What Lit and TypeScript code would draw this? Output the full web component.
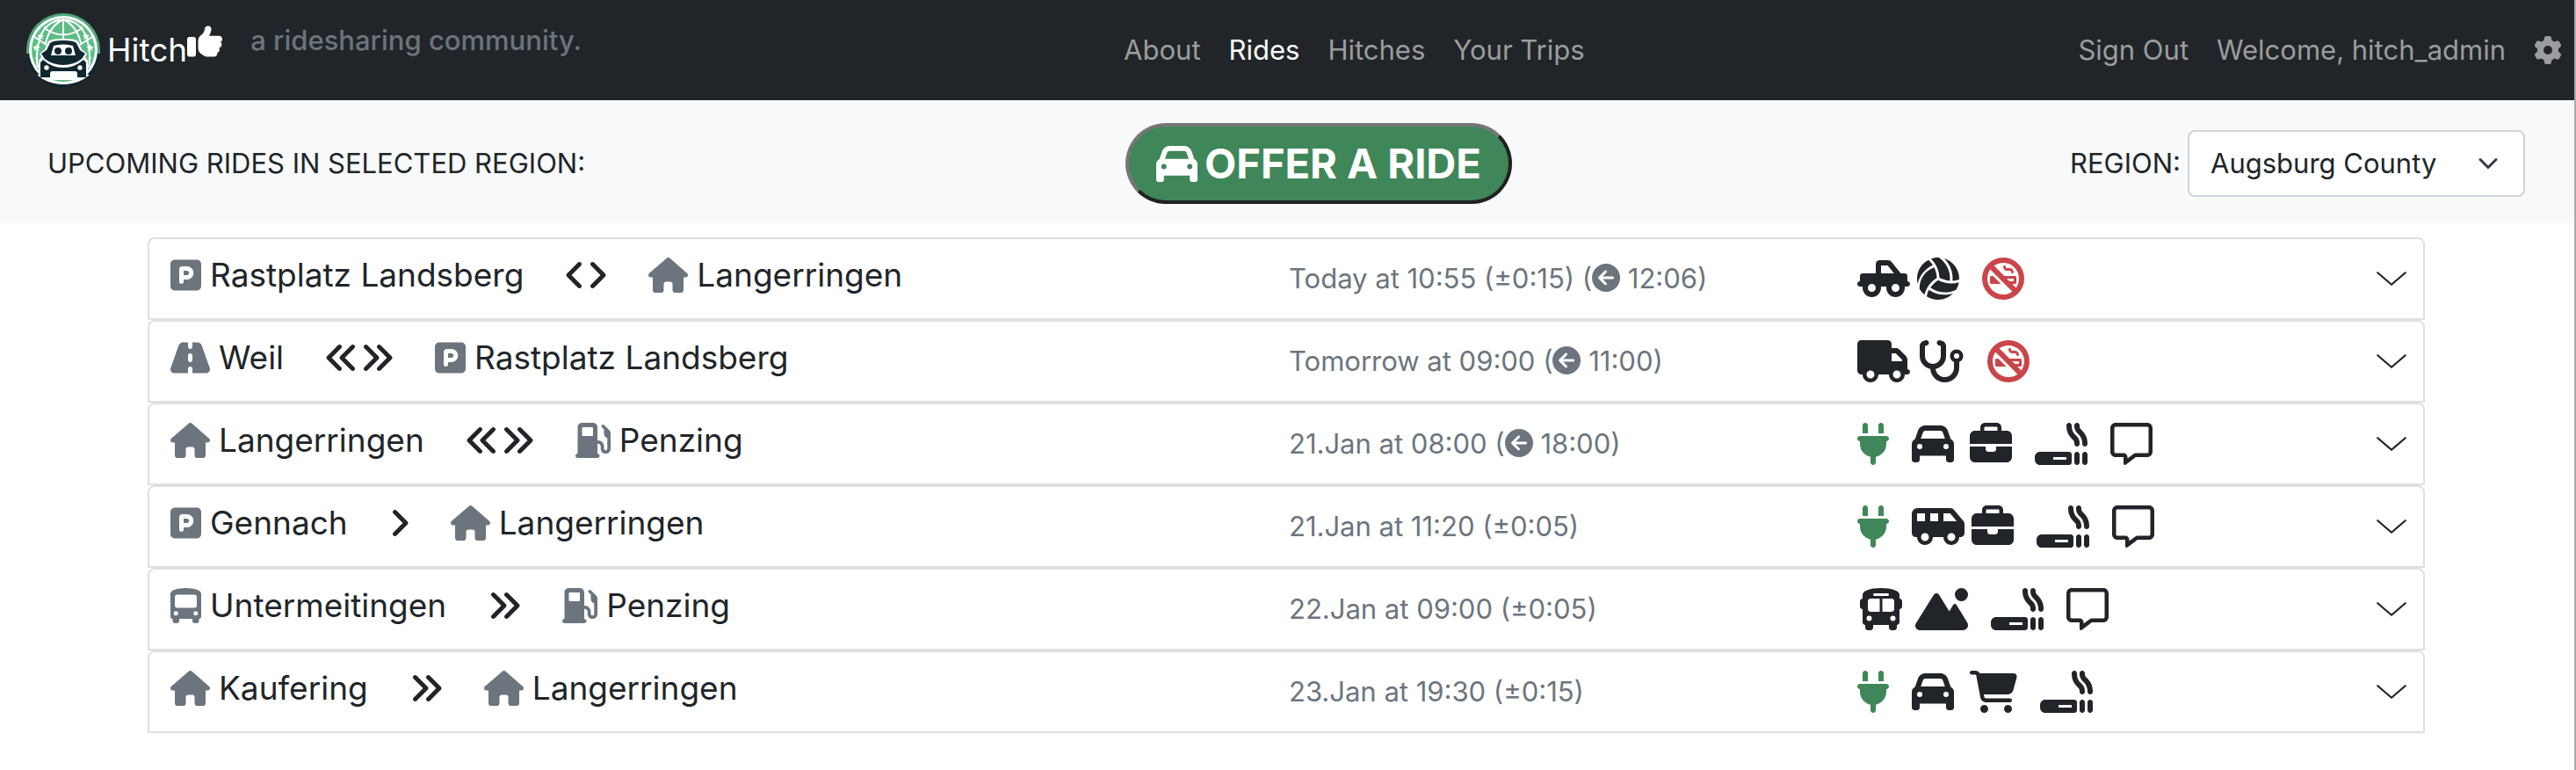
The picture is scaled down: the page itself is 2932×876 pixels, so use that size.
import { LitElement, html, css, svg } from "lit";
import { customElement, property } from "lit/decorators.js";

type Glyph = { w: number; d: string };

const GLYPHS: Record<string, Glyph> = {
  house: { w: 576, d: "M575.8 255.5c0 18-15 32.1-32 32.1h-32l.7 160.2c0 2.7-.2 5.4-.5 8.1V472c0 22.1-17.9 40-40 40H456c-1.1 0-2.2 0-3.3-.1c-1.4 .1-2.8 .1-4.2 .1H416 392c-22.1 0-40-17.9-40-40V448 384c0-17.7-14.3-32-32-32H256c-17.7 0-32 14.3-32 32v64 24c0 22.1-17.9 40-40 40H160 128.1c-1.5 0-3-.1-4.5-.2c-1.2 .1-2.4 .2-3.6 .2H104c-22.1 0-40-17.9-40-40V360c0-.9 0-1.9 .1-2.8V287.6H32c-18 0-32-14-32-32.1c0-9 3-17 10-24L266.4 8c7-7 15-8 22-8s15 2 21 7L564.8 231.5c8 7 12 15 11 24z" },
  parking: { w: 448, d: "M64 32C28.7 32 0 60.7 0 96V416c0 35.3 28.7 64 64 64H384c35.3 0 64-28.7 64-64V96c0-35.3-28.7-64-64-64H64zM192 256h48c17.7 0 32-14.3 32-32s-14.3-32-32-32H192v64zm48 64H192v32c0 17.7-14.3 32-32 32s-32-14.3-32-32V288 168c0-22.1 17.9-40 40-40h72c53 0 96 43 96 96s-43 96-96 96z" },
  road: { w: 576, d: "M256 32H181.2c-27.1 0-51.3 17.1-60.3 42.6L3.1 407.2C1.1 413 0 419.2 0 425.4C0 455.5 24.5 480 54.6 480H256V416c0-17.7 14.3-32 32-32s32 14.3 32 32v64H521.4c30.2 0 54.6-24.5 54.6-54.6c0-6.2-1.1-12.4-3.1-18.2L455.1 74.6C446 49.1 421.9 32 394.8 32H320V96c0 17.7-14.3 32-32 32s-32-14.3-32-32V32zm64 192v64c0 17.7-14.3 32-32 32s-32-14.3-32-32V224c0-17.7 14.3-32 32-32s32 14.3 32 32z" },
  pump: { w: 512, d: "M32 64C32 28.7 60.7 0 96 0H256c35.3 0 64 28.7 64 64V256h8c48.6 0 88 39.4 88 88v32c0 13.3 10.7 24 24 24s24-10.7 24-24V222c-27.6-7.1-48-32.2-48-62V96L384 64c-8.8-8.8-8.8-23.2 0-32s23.2-8.8 32 0l77.3 77.3c12 12 18.7 28.3 18.7 45.3V168v24 32V376c0 39.8-32.2 72-72 72s-72-32.2-72-72V344c0-22.1-17.9-40-40-40h-8V448c17.7 0 32 14.3 32 32s-14.3 32-32 32H32c-17.7 0-32-14.3-32-32s14.3-32 32-32V64zM96 80v96c0 8.8 7.2 16 16 16H240c8.8 0 16-7.2 16-16V80c0-8.8-7.2-16-16-16H112c-8.8 0-16 7.2-16 16z" },
  busStop: { w: 448, d: "M224 0C348.8 0 448 35.2 448 80V96 416c0 17.7-14.3 32-32 32v32c0 17.7-14.3 32-32 32H352c-17.7 0-32-14.3-32-32V448H128v32c0 17.7-14.3 32-32 32H64c-17.7 0-32-14.3-32-32l0-32c-17.7 0-32-14.3-32-32V96 80C0 35.2 99.2 0 224 0zM64 128V256c0 17.7 14.3 32 32 32H352c17.7 0 32-14.3 32-32V128c0-17.7-14.3-32-32-32H96c-17.7 0-32 14.3-32 32zM80 400a32 32 0 1 0 0-64 32 32 0 1 0 0 64zm288 0a32 32 0 1 0 0-64 32 32 0 1 0 0 64z" },
  right: { w: 320, d: "M278.6 233.4c12.5 12.5 12.5 32.8 0 45.3l-160 160c-12.5 12.5-32.8 12.5-45.3 0s-12.5-32.8 0-45.3L210.7 256 73.4 118.6c-12.5-12.5-12.5-32.8 0-45.3s32.8-12.5 45.3 0l160 160z" },
  left: { w: 320, d: "M41.4 233.4c-12.5 12.5-12.5 32.8 0 45.3l160 160c12.5 12.5 32.8 12.5 45.3 0s12.5-32.8 0-45.3L109.3 256 246.6 118.6c12.5-12.5 12.5-32.8 0-45.3s-32.8-12.5-45.3 0l-160 160z" },
  rights: { w: 512, d: "M470.6 278.6c12.5-12.5 12.5-32.8 0-45.3l-160-160c-12.5-12.5-32.8-12.5-45.3 0s-12.5 32.8 0 45.3L402.7 256 265.4 393.4c-12.5 12.5-12.5 32.8 0 45.3s32.8 12.5 45.3 0l160-160zm-352 160l160-160c12.5-12.5 12.5-32.8 0-45.3l-160-160c-12.5-12.5-32.8-12.5-45.3 0s-12.5 32.8 0 45.3L210.7 256 73.4 393.4c-12.5 12.5-12.5 32.8 0 45.3s32.8 12.5 45.3 0z" },
  lefts: { w: 512, d: "M41.4 233.4c-12.5 12.5-12.5 32.8 0 45.3l160 160c12.5 12.5 32.8 12.5 45.3 0s12.5-32.8 0-45.3L109.3 256 246.6 118.6c12.5-12.5 12.5-32.8 0-45.3s-32.8-12.5-45.3 0l-160 160zm352-160l-160 160c-12.5 12.5-12.5 32.8 0 45.3l160 160c12.5 12.5 32.8 12.5 45.3 0s12.5-32.8 0-45.3L301.3 256 438.6 118.6c12.5-12.5 12.5-32.8 0-45.3s-32.8-12.5-45.3 0z" },
  plug: { w: 384, d: "M96 0C78.3 0 64 14.3 64 32v96h64V32c0-17.7-14.3-32-32-32zM288 0c-17.7 0-32 14.3-32 32v96h64V32c0-17.7-14.3-32-32-32zM32 160c-17.7 0-32 14.3-32 32s14.3 32 32 32v32c0 77.4 55 142 128 156.8V480c0 17.7 14.3 32 32 32s32-14.3 32-32V412.8C297 398 352 333.4 352 256V224c17.7 0 32-14.3 32-32s-14.3-32-32-32H32z" },
  car: { w: 512, d: "M135.2 117.4L109.1 192H402.9l-26.1-74.6C372.3 104.6 360.2 96 346.6 96H165.4c-13.6 0-25.7 8.6-30.2 21.4zM39.6 196.8L74.8 96.3C88.3 57.8 124.6 32 165.4 32H346.6c40.8 0 77.1 25.8 90.6 64.3l35.2 100.5c23.2 9.6 39.6 32.5 39.6 59.2V400v48c0 17.7-14.3 32-32 32H448c-17.7 0-32-14.3-32-32V400H96v48c0 17.7-14.3 32-32 32H32c-17.7 0-32-14.3-32-32V400 256c0-26.7 16.4-49.6 39.6-59.2zM128 288a32 32 0 1 0 -64 0 32 32 0 1 0 64 0zm288 32a32 32 0 1 0 0-64 32 32 0 1 0 0 64z" },
  briefcase: { w: 512, d: "M184 48H328c4.4 0 8 3.6 8 8V96H176V56c0-4.4 3.6-8 8-8zm-56 8V96H64C28.7 96 0 124.7 0 160v96H192 320 512V160c0-35.3-28.7-64-64-64H384V56c0-30.9-25.1-56-56-56H184c-30.9 0-56 25.1-56 56zM512 288H320v32c0 17.7-14.3 32-32 32H224c-17.7 0-32-14.3-32-32V288H0V416c0 35.3 28.7 64 64 64H448c35.3 0 64-28.7 64-64V288z" },
  smoking: { w: 640, d: "M448 32V43c0 38.2 15.2 74.8 42.2 101.8l21 21c21 21 32.8 49.5 32.8 79.2v11c0 17.7-14.3 32-32 32s-32-14.3-32-32V245c0-12.7-5.1-24.9-14.1-33.9l-21-21C405.9 151.1 384 98.1 384 43V32c0-17.7 14.3-32 32-32s32 14.3 32 32zM576 256V245c0-38.2-15.2-74.8-42.2-101.8l-21-21c-21-21-32.8-49.5-32.8-79.2V32c0-17.7 14.3-32 32-32s32 14.3 32 32V43c0 12.7 5.1 24.9 14.1 33.9l21 21c39 39 60.9 91.9 60.9 147.1v11c0 17.7-14.3 32-32 32s-32-14.3-32-32zM0 416c0-35.3 28.7-64 64-64H416c17.7 0 32 14.3 32 32v96c0 17.7-14.3 32-32 32H64c-35.3 0-64-28.7-64-64V416zm224 0v32H384V416H224zm288-64c17.7 0 32 14.3 32 32v96c0 17.7-14.3 32-32 32s-32-14.3-32-32V384c0-17.7 14.3-32 32-32zm96 0c17.7 0 32 14.3 32 32v96c0 17.7-14.3 32-32 32s-32-14.3-32-32V384c0-17.7 14.3-32 32-32z" },
  noSmoking: { w: 512, d: "M99.5 144.8L178.7 224l96 96 92.5 92.5C335.9 434.9 297.5 448 256 448C150 448 64 362 64 256c0-41.5 13.1-79.9 35.5-111.2zM333.3 288l-32-32H384v32H333.3zm32 32H400c8.8 0 16-7.2 16-16V240c0-8.8-7.2-16-16-16H269.3L144.8 99.5C176.1 77.1 214.5 64 256 64c106 0 192 86 192 192c0 41.5-13.1 79.9-35.5 111.2L365.3 320zM256 512A256 256 0 1 0 256 0a256 256 0 1 0 0 512zM272 96c-8.8 0-16 7.2-16 16c0 26.5 21.5 48 48 48h32c8.8 0 16 7.2 16 16s7.2 16 16 16s16-7.2 16-16c0-26.5-21.5-48-48-48H304c-8.8 0-16-7.2-16-16s-7.2-16-16-16zM229.5 320l-96-96H112c-8.8 0-16 7.2-16 16v64c0 8.8 7.2 16 16 16H229.5z" },
  message: { w: 512, d: "M160 368c26.5 0 48 21.5 48 48v16l72.5-54.4c8.3-6.2 18.4-9.6 28.8-9.6H448c8.8 0 16-7.2 16-16V64c0-8.8-7.2-16-16-16H64c-8.8 0-16 7.2-16 16V352c0 8.8 7.2 16 16 16h96zm48 124l-.2 .2-5.1 3.8-17.1 12.8c-4.8 3.6-11.3 4.2-16.8 1.5s-8.8-8.2-8.8-14.3V474.7v-6.4V468v-4V416H112 64c-35.3 0-64-28.7-64-64V64C0 28.7 28.7 0 64 0H448c35.3 0 64 28.7 64 64V352c0 35.3-28.7 64-64 64H309.3L208 492z" },
  pickup: { w: 640, d: "M368.6 96l76.8 96H288V96h80.6zM224 80V192H64c-17.7 0-32 14.3-32 32v64c-17.7 0-32 14.3-32 32s14.3 32 32 32H65.1c-.7 5.2-1.1 10.6-1.1 16c0 61.9 50.1 112 112 112s112-50.1 112-112c0-5.4-.4-10.8-1.1-16h66.3c-.7 5.2-1.1 10.6-1.1 16c0 61.9 50.1 112 112 112s112-50.1 112-112c0-5.4-.4-10.8-1.1-16H608c17.7 0 32-14.3 32-32s-14.3-32-32-32V224c0-17.7-14.3-32-32-32H527.4L418.6 56c-12.1-15.2-30.5-24-50-24H272c-26.5 0-48 21.5-48 48zM128 368a48 48 0 1 1 96 0 48 48 0 1 1 -96 0zM416 368a48 48 0 1 1 96 0 48 48 0 1 1 -96 0z" },
  volleyball: { w: 512, d: "M511.8 267.4c-26.1 8.7-53.4 13.8-81 15.1c9.2-105.3-31.5-204.2-103.2-272.4C434.1 41.1 512 139.5 512 256c0 3.8-.1 7.6-.2 11.4zm-3.9 34.7c-5.8 32-17.6 62-34.2 88.7c-97.5 48.5-217.7 42.6-311.9-24.5c23.7-36.2 55.4-67.7 94.5-91.8c79.9 43.2 170.1 50.8 251.6 27.6zm-236-55.5c-2.5-90.9-41.1-172.7-101.9-231.7C196.8 5.2 225.8 0 256 0c2.7 0 5.3 0 7.9 .1c90.8 60.2 145.7 167.2 134.7 282.3c-43.1-2.4-86.4-14.1-126.8-35.9zM138 28.8c20.6 18.3 38.7 39.4 53.7 62.6C95.9 136.1 30.6 220.8 7.3 316.9C2.5 297.4 0 277 0 256C0 157.2 56 71.5 138 28.8zm69.6 90.5c19.5 38.6 31 81.9 32.3 127.7C162.5 294.6 110.9 368.9 90.2 451C66 430.6 45.6 405.9 30.2 378c-3.9-113.9 61.9-215.9 177.4-258.7zM116.5 471c5-27 14-53 28-78c91 64 195 72 293 42C391 483 327 512 256 512c-51.600 0-99.500-15.100-139.500-41z" },
  truck: { w: 640, d: "M48 0C21.5 0 0 21.5 0 48V368c0 26.5 21.5 48 48 48H64c0 53 43 96 96 96s96-43 96-96H384c0 53 43 96 96 96s96-43 96-96h32c17.7 0 32-14.3 32-32s-14.3-32-32-32V288 256 237.3c0-17-6.7-33.3-18.7-45.3L512 114.7c-12-12-28.3-18.7-45.3-18.7H416V48c0-26.5-21.5-48-48-48H48zM416 160h50.7L544 237.3V256H416V160zM112 416a48 48 0 1 1 96 0 48 48 0 1 1 -96 0zm368-48a48 48 0 1 1 0 96 48 48 0 1 1 0-96z" },
  stethoscope: { w: 576, d: "M142.4 21.9c5.6 16.8-3.5 34.9-20.2 40.5L96 71.1V192c0 53 43 96 96 96s96-43 96-96V71.1l-26.1-8.7c-16.8-5.6-25.8-23.7-20.2-40.5s23.7-25.8 40.5-20.2l26.1 8.7C334.4 19.1 352 43.5 352 71.1V192c0 77.2-54.6 141.6-127.3 156.7C231 404.6 278.4 448 336 448c61.9 0 112-50.1 112-112V265.3c-28.3-12.3-48-40.5-48-73.3c0-44.2 35.8-80 80-80s80 35.8 80 80c0 32.8-19.7 61-48 73.3V336c0 97.2-78.8 176-176 176c-92.9 0-168.9-71.9-175.5-163.1C87.2 334.2 32 269.6 32 192V71.1c0-27.5 17.6-52 43.8-60.7l26.1-8.7c16.8-5.6 34.9 3.5 40.5 20.2zM480 224a32 32 0 1 0 0-64 32 32 0 1 0 0 64z" },
  van: { w: 640, d: "M64 104v88h96V96H72c-4.4 0-8 3.6-8 8zm482 88L465.1 96H384v96H546zm-226 0V96H224v96h96zM592 384H576c0 53-43 96-96 96s-96-43-96-96H256c0 53-43 96-96 96s-96-43-96-96H48c-26.5 0-48-21.5-48-48V104C0 64.2 32.2 32 72 32H192 352 465.1c18.9 0 36.8 8.3 49 22.8L625 186.5c9.7 11.5 15 26.1 15 41.2V336c0 26.5-21.5 48-48 48zm-64 0a48 48 0 1 0 -96 0 48 48 0 1 0 96 0zM160 432a48 48 0 1 0 0-96 48 48 0 1 0 0 96z" },
  bus: { w: 576, d: "M288 0C422.4 0 512 35.2 512 80V96l0 32c17.7 0 32 14.3 32 32v64c0 17.7-14.3 32-32 32l0 160c0 17.7-14.3 32-32 32v32c0 17.7-14.3 32-32 32H416c-17.7 0-32-14.3-32-32V448H192v32c0 17.7-14.3 32-32 32H128c-17.7 0-32-14.3-32-32l0-32c-17.7 0-32-14.3-32-32l0-160c-17.7 0-32-14.3-32-32V160c0-17.7 14.3-32 32-32h0V96h0V80C64 35.2 153.6 0 288 0zM128 160v96c0 17.7 14.3 32 32 32H272V128H160c-17.7 0-32 14.3-32 32zM304 288H416c17.7 0 32-14.3 32-32V160c0-17.7-14.3-32-32-32H304V288zM144 400a32 32 0 1 0 0-64 32 32 0 1 0 0 64zm288 0a32 32 0 1 0 0-64 32 32 0 1 0 0 64zM384 80c0-8.8-7.2-16-16-16H208c-8.8 0-16 7.2-16 16s7.2 16 16 16H368c8.8 0 16-7.2 16-16z" },
  mountain: { w: 640, d: "M560 160A80 80 0 1 0 560 0a80 80 0 1 0 0 160zM55.9 512H381.1h75H578.9c33.8 0 61.1-27.4 61.1-61.1c0-11.2-3.1-22.2-8.9-31.8l-132-216.3C495 196.1 487.8 192 480 192s-15 4.1-19.1 10.7l-48.2 79L286.8 81c-6.6-10.6-18.3-17-30.8-17s-24.1 6.4-30.8 17L8.6 426.4C3 435.3 0 445.6 0 456.1C0 487 25 512 55.9 512z" },
  cart: { w: 576, d: "M0 24C0 10.7 10.7 0 24 0H69.5c22 0 41.5 12.8 50.6 32h411c26.3 0 45.5 25 38.6 50.4l-41 152.3c-8.5 31.4-37 53.3-69.5 53.3H170.7l5.4 28.5c2.2 11.3 12.1 19.5 23.6 19.5H488c13.3 0 24 10.7 24 24s-10.7 24-24 24H199.7c-34.6 0-64.3-24.6-70.7-58.5L77.4 54.5c-.7-3.8-4-6.5-7.9-6.5H24C10.7 48 0 37.3 0 24zM128 464a48 48 0 1 1 96 0 48 48 0 1 1 -96 0zm336-48a48 48 0 1 1 0 96 48 48 0 1 1 0-96z" },
  gear: { w: 512, d: "M495.9 166.6c3.2 8.7 .5 18.4-6.4 24.6l-43.3 39.4c1.1 8.3 1.7 16.8 1.7 25.4s-.6 17.1-1.7 25.4l43.3 39.4c6.9 6.2 9.6 15.9 6.4 24.6c-4.4 11.9-9.7 23.3-15.8 34.3l-4.7 8.1c-6.6 11-14 21.4-22.1 31.2c-5.9 7.2-15.7 9.6-24.5 6.8l-55.7-17.7c-13.4 10.3-28.2 18.9-44 25.4l-12.5 57.1c-2 9.1-9 16.3-18.2 17.8c-13.8 2.3-28 3.5-42.5 3.5s-28.7-1.2-42.5-3.5c-9.2-1.5-16.2-8.7-18.2-17.8l-12.5-57.1c-15.8-6.5-30.6-15.1-44-25.4L83.1 425.9c-8.8 2.8-18.6 .3-24.5-6.8c-8.1-9.8-15.5-20.2-22.1-31.2l-4.7-8.1c-6.1-11-11.4-22.4-15.8-34.3c-3.2-8.7-.5-18.4 6.4-24.6l43.3-39.4C64.6 273.1 64 264.6 64 256s.6-17.1 1.7-25.4L22.4 191.2c-6.9-6.2-9.6-15.9-6.4-24.6c4.4-11.9 9.7-23.3 15.8-34.3l4.7-8.1c6.6-11 14-21.4 22.1-31.2c5.9-7.2 15.7-9.6 24.5-6.8l55.7 17.7c13.4-10.3 28.2-18.9 44-25.4l12.5-57.1c2-9.1 9-16.3 18.2-17.8C227.3 1.2 241.5 0 256 0s28.7 1.2 42.5 3.5c9.2 1.5 16.2 8.7 18.2 17.8l12.5 57.1c15.8 6.5 30.6 15.1 44 25.4l55.7-17.7c8.8-2.8 18.6-.3 24.5 6.8c8.1 9.8 15.5 20.2 22.1 31.2l4.7 8.1c6.1 11 11.4 22.4 15.8 34.3zM256 336a80 80 0 1 0 0-160 80 80 0 1 0 0 160z" },
  thumb: { w: 512, d: "M313.4 32.9c26 5.2 42.9 30.5 37.7 56.5l-2.3 11.4c-5.3 26.7-15.1 52.1-28.8 75.2H464c26.5 0 48 21.5 48 48c0 18.5-10.5 34.6-25.9 42.6C497 275.4 504 288.9 504 304c0 23.4-16.8 42.9-38.9 47.1c4.4 7.3 6.9 15.8 6.9 24.9c0 21.3-13.9 39.4-33.1 45.6c.7 3.3 1.1 6.8 1.1 10.4c0 26.5-21.5 48-48 48H294.5c-19 0-37.5-5.6-53.3-16.1l-38.5-25.7C176 420.4 160 390.4 160 358.3V320 272 247.1c0-29.2 13.3-56.7 36-75l7.4-5.9c26.5-21.2 44.6-51 51.2-84.2l2.3-11.4c5.2-26 30.5-42.9 56.5-37.7zM32 192H96c17.7 0 32 14.3 32 32V448c0 17.7-14.3 32-32 32H32c-17.7 0-32-14.3-32-32V224c0-17.7 14.3-32 32-32z" },
  back: { w: 512, d: "M512 256A256 256 0 1 0 0 256a256 256 0 1 0 512 0zM231 127c9.4-9.4 24.6-9.4 33.9 0s9.4 24.6 0 33.9l-71 71L376 232c13.3 0 24 10.7 24 24s-10.7 24-24 24l-182.1 0 71 71c9.4 9.4 9.4 24.6 0 33.9s-24.6 9.4-33.9 0L119 273c-9.4-9.4-9.4-24.6 0-33.9L231 127z" },
};

// Glyphs are drawn one em high; the width follows each glyph's own box.
@customElement("ride-icon")
export class RideIcon extends LitElement {
  @property() name = "house";
  static styles = css`
    :host { display: inline-flex; flex: none; }
    .glyph { display: block; height: 1em; fill: currentColor; fill-rule: evenodd; }
  `;
  render() {
    const g = GLYPHS[this.name];
    return html`<svg class="glyph" viewBox="0 0 ${g.w} 512" aria-hidden="true">${svg`<path d=${g.d}></path>`}</svg>`;
  }
}

@customElement("hitch-logo")
export class HitchLogo extends LitElement {
  static styles = css`
    :host { display: block; flex: none; width: 84px; height: 84px; }
    .mark { display: block; width: 100%; height: 100%; }
  `;
  render() {
    return html`<svg class="mark" viewBox="0 0 84 84" aria-hidden="true">
      <path fill="#4fa578" d="M0 46V42a42 42 0 0 1 84 0v4z"></path>
      <path fill="#11272f" d="M0 46a42 38 0 0 0 84 0z"></path>
      <circle cx="42" cy="42" r="39" fill="#fff"></circle>
      <circle cx="42" cy="42" r="36" fill="#5cbd86"></circle>
      <g fill="none" stroke="#fff" stroke-width="2">
        <path d="M42 6v23M42 7C32 12 25 21 22 34M42 7c10 5 17 14 20 27M22 18q20 13 40 0M42 7Q28 8 19 20M42 7q14 1 23 13M9 27l14 9M75 27l-14 9M22 15C14 28 10 44 13 62M62 15c8 13 12 29 9 47"></path>
      </g>
      <g fill="#fff">
        <path d="M16 22l1 3h3l-2 2 1 3-3-2-3 2 1-3-2-2h3zM68 22l1 3h3l-2 2 1 3-3-2-3 2 1-3-2-2h3zM11.500 35l1.200 3h3.300l-2.500 2 1 3-3-2-3 2 1-3-2.500-2h3.300zM72.500 35l1.200 3h3.300l-2.500 2 1 3-3-2-3 2 1-3-2.500-2h3.300z"></path>
        <circle cx="11" cy="51" r="1"></circle><circle cx="73" cy="51" r="1"></circle>
        <path d="M14 66V54l3-4-2-4 6-5 4-9q3-3 17-3t17 3l4 9 6 5-2 4 3 4v12l-7 8H21z"></path>
        <path d="M12 70h60q-12 11-30 11T12 70z"></path>
      </g>
      <path fill="#11272f" d="M17 46l6-4 4-8q3-3 15-3t15 3l4 8 6 4-4 6q-9 7-21 7t-21-7z"></path>
      <path fill="#11272f" d="M16 73V56l3-3q10 9 23 9t23-9l3 3v17h-10v-4q0-3-3-3H30q-3 0-3 3v4z"></path>
      <path fill="#fff" d="M28 48l3-11q11-3 22 0l3 11z"></path>
      <g fill="#11272f"><circle cx="36" cy="43" r="4"></circle><circle cx="48" cy="43" r="4"></circle></g>
      <g fill="#fff"><circle cx="23" cy="62" r="2.700"></circle><circle cx="61" cy="62" r="2.700"></circle></g>
      <path fill="#5cbd86" d="M30 76h24q-12 4-24 0z"></path>
    </svg>`;
  }
}

type Stop = { icon: string; name: string };
type Ride = { from: Stop; to: Stop; dir: string[]; when: string; back?: string; ev?: boolean; vehicle: string; purpose: string; smoking: boolean; note?: boolean };

const P = "parking", H = "house", G = "pump";
const RIDES: Ride[] = [
  { from: { icon: P, name: "Rastplatz Landsberg" }, dir: ["left", "right"], to: { icon: H, name: "Langerringen" }, when: "Today at 10:55 (±0:15)", back: "12:06", vehicle: "pickup", purpose: "volleyball", smoking: false },
  { from: { icon: "road", name: "Weil" }, dir: ["lefts", "rights"], to: { icon: P, name: "Rastplatz Landsberg" }, when: "Tomorrow at 09:00", back: "11:00", vehicle: "truck", purpose: "stethoscope", smoking: false },
  { from: { icon: H, name: "Langerringen" }, dir: ["lefts", "rights"], to: { icon: G, name: "Penzing" }, when: "21.Jan at 08:00", back: "18:00", ev: true, vehicle: "car", purpose: "briefcase", smoking: true, note: true },
  { from: { icon: P, name: "Gennach" }, dir: ["right"], to: { icon: H, name: "Langerringen" }, when: "21.Jan at 11:20 (±0:05)", ev: true, vehicle: "van", purpose: "briefcase", smoking: true, note: true },
  { from: { icon: "busStop", name: "Untermeitingen" }, dir: ["rights"], to: { icon: G, name: "Penzing" }, when: "22.Jan at 09:00 (±0:05)", vehicle: "bus", purpose: "mountain", smoking: true, note: true },
  { from: { icon: H, name: "Kaufering" }, dir: ["rights"], to: { icon: H, name: "Langerringen" }, when: "23.Jan at 19:30 (±0:15)", ev: true, vehicle: "car", purpose: "cart", smoking: true },
];

@customElement("ride-row")
export class RideRow extends LitElement {
  @property({ attribute: false }) ride!: Ride;
  static styles = css`
    :host { display: block; }
    .row {
      box-sizing: border-box; width: 100%; min-height: 94px; padding: 0 18px 0 24px; margin: 0;
      display: grid; grid-template-columns: 1274fr 648fr 590fr 36px; align-items: center;
      background: #fff; border: 2px solid #dfdfdf; border-radius: 8px 8px 0 0;
      color: #212529; font: inherit; text-align: left; cursor: pointer;
    }
    .route { display: flex; align-items: center; font-size: 37px; line-height: 48px; padding-bottom: 8px; }
    .stop { display: flex; align-items: center; gap: 10px; }
    .place { color: #6c757d; font-size: 40px; }
    .dir { display: flex; margin: 0 46px; font-size: 40px; }
    .when { font-size: 31px; line-height: 48px; color: #6c757d; }
    .back { vertical-align: -4px; font-size: 32px; }
    .tags { display: flex; align-items: center; font-size: 48px; }
    .ev { color: #3f8758; margin-right: 26px; }
    .vehicle { display: flex; min-width: 58px; margin-right: 8px; }
    .no { color: #cb444a; margin-left: 26px; }
    .yes, .note { margin-left: 26px; }
    .chevron { width: 36px; height: 36px; fill: none; stroke: #212529; stroke-width: 1; stroke-linecap: round; stroke-linejoin: round; }
  `;
  render() {
    const r = this.ride;
    const stop = (s: Stop) => html`<span class="stop"><ride-icon class="place" name=${s.icon}></ride-icon>${s.name}</span>`;
    return html`<button class="row" type="button" aria-expanded="false">
      <span class="route">${stop(r.from)}<span class="dir">${r.dir.map((d) => html`<ride-icon name=${d}></ride-icon>`)}</span>${stop(r.to)}</span>
      <span class="when">${r.when}${r.back ? html` (<ride-icon class="back" name="back"></ride-icon> ${r.back})` : ""}</span>
      <span class="tags">
        ${r.ev ? html`<ride-icon class="ev" name="plug"></ride-icon>` : ""}
        <span class="vehicle"><ride-icon name=${r.vehicle}></ride-icon></span>
        <ride-icon name=${r.purpose}></ride-icon>
        <ride-icon class=${r.smoking ? "yes" : "no"} name=${r.smoking ? "smoking" : "noSmoking"}></ride-icon>
        ${r.note ? html`<ride-icon class="note" name="message"></ride-icon>` : ""}
      </span>
      <svg class="chevron" viewBox="0 0 16 16" aria-hidden="true"><path d="M1 5l7 6 7-6"></path></svg>
    </button>`;
  }
}

@customElement("app-root")
export class AppRoot extends LitElement {
  static styles = css`
    :host { display: block; min-height: 100vh; box-sizing: border-box; border-right: 2px solid #a8abad; background: #fff; color: #212529; font-family: Inter, "Liberation Sans", sans-serif; font-size: 31px; line-height: 48px; }
    .bar { display: grid; grid-template-columns: 1252fr auto 1115fr; align-items: center; height: 114px; padding: 0 14px 0 30px; background: #212529; }
    .left { display: flex; align-items: center; }
    .brand { display: flex; align-items: center; gap: 8px; color: #fff; font-size: 37px; text-decoration: none; }
    .name { display: flex; align-items: center; }
    .thumb { padding-bottom: 20px; font-size: 40px; }
    .tagline { margin-left: 32px; padding-bottom: 22px; font-weight: 500; color: #6c757d; }
    .links { display: flex; align-items: center; gap: 32px; }
    .end { justify-content: flex-end; }
    .link { color: #9b9d9e; text-decoration: none; }
    .active { color: #fff; }
    .settings { display: flex; font-size: 32px; }
    .tools { display: grid; grid-template-columns: 1228fr auto 1154fr; align-items: center; box-sizing: border-box; height: 140px; padding: 4px 56px 0 54px; background: #f8f9fa; }
    .heading { margin: 0; font-size: 31px; font-weight: 400; }
    .offer { display: flex; align-items: center; gap: 8px; height: 92px; padding: 0 31px; border: 4px solid #212121; border-top-color: #767676; border-left-color: #767676; border-radius: 46px; background: #3f8758; color: #fff; font: 700 47px/56px Inter, "Liberation Sans", sans-serif; }
    .region { display: flex; align-items: center; justify-content: flex-end; gap: 8px; }
    .pick { appearance: none; box-sizing: border-box; width: 384px; height: 76px; padding: 0 72px 0 24px; border: 2px solid #ced4da; border-radius: 8px; color: #212529; font: inherit;
      background: #fff url("data:image/svg+xml,%3Csvg xmlns='http://www.w3.org/2000/svg' viewBox='0 0 16 16'%3E%3Cpath fill='none' stroke='%23343a40' stroke-linecap='round' stroke-linejoin='round' stroke-width='2' d='m2 5 6 6 6-6'/%3E%3C/svg%3E") no-repeat right 28px center / 24px 24px; }
    .list { padding: 16px 170px 0 168px; }
  `;
  render() {
    return html`
      <header class="bar">
        <div class="left">
          <a class="brand" href="#home"><hitch-logo></hitch-logo><span class="name">Hitch<ride-icon class="thumb" name="thumb"></ride-icon></span></a>
          <span class="tagline">a ridesharing community.</span>
        </div>
        <nav class="links">
          <a class="link" href="#about">About</a>
          <a class="link active" href="#rides" aria-current="page">Rides</a>
          <a class="link" href="#hitches">Hitches</a>
          <a class="link" href="#trips">Your Trips</a>
        </nav>
        <div class="links end">
          <a class="link" href="#signout">Sign Out</a>
          <a class="link" href="#profile">Welcome, hitch_admin</a>
          <a class="link settings" href="#settings" aria-label="Settings"><ride-icon name="gear"></ride-icon></a>
        </div>
      </header>
      <section class="tools">
        <h1 class="heading">UPCOMING RIDES IN SELECTED REGION:</h1>
        <button class="offer" type="button"><ride-icon name="car"></ride-icon>OFFER A RIDE</button>
        <div class="region">
          <label for="region">REGION:</label>
          <select class="pick" id="region"><option>Augsburg County</option></select>
        </div>
      </section>
      <main class="list">${RIDES.map((r) => html`<ride-row .ride=${r}></ride-row>`)}</main>
    `;
  }
}
